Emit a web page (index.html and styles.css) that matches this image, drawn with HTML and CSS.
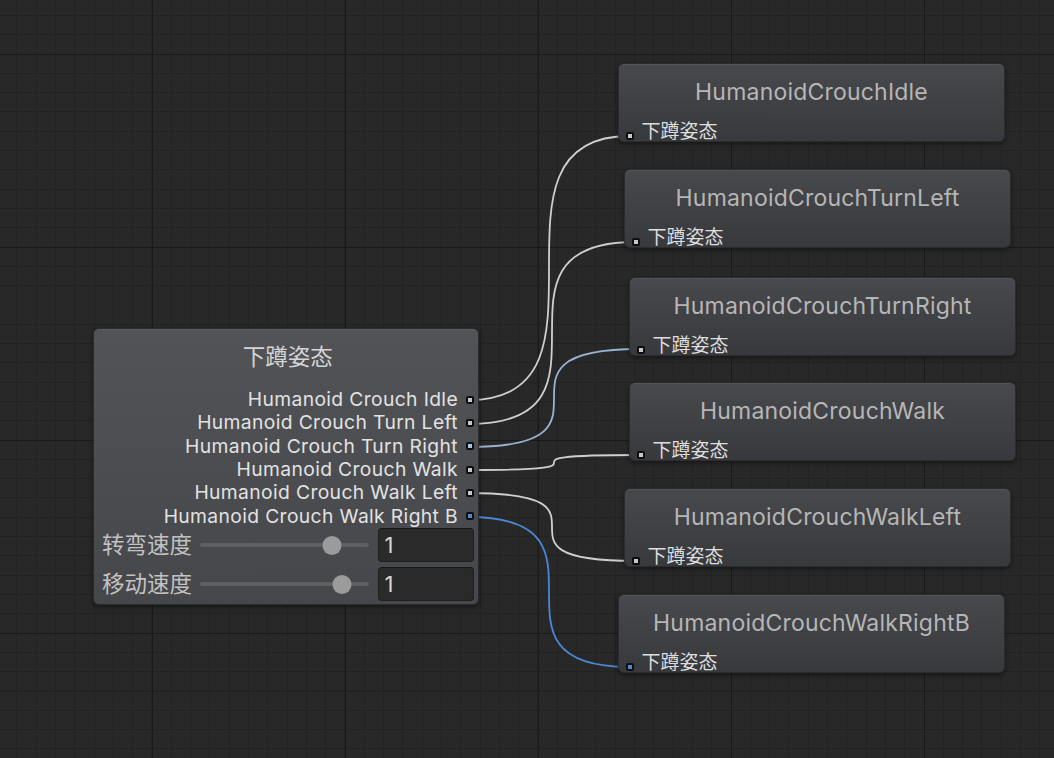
FILE: index.html
```html
<!DOCTYPE html>
<html lang="zh">
<head>
<meta charset="utf-8">
<title>Graph</title>
<link rel="stylesheet" href="styles.css">
</head>
<body>
<div class="canvas">
  <svg class="edges" width="1054" height="758" viewBox="0 0 1054 758">
    <path class="edge" d="M469 400 C629 400 469 136 629 136"/>
    <path class="edge" d="M469 424 C635 424 469 242 635 242"/>
    <path class="edge edge-light-blue" d="M469 447 C639 447 469 349 639 349"/>
    <path class="edge" d="M469 470 C639 470 469 455 639 455"/>
    <path class="edge" d="M469 493 C635 493 469 561 635 561"/>
    <path class="edge edge-blue" d="M469 517 C629 517 469 667 629 667"/>
  </svg>

  <div class="node main">
    <div class="main-title">下蹲姿态</div>
    <div class="outputs">
      <div class="out-row"><span class="out-label">Humanoid Crouch Idle</span><span class="port"></span></div>
      <div class="out-row"><span class="out-label">Humanoid Crouch Turn Left</span><span class="port"></span></div>
      <div class="out-row"><span class="out-label">Humanoid Crouch Turn Right</span><span class="port port-light-blue"></span></div>
      <div class="out-row"><span class="out-label">Humanoid Crouch Walk</span><span class="port"></span></div>
      <div class="out-row"><span class="out-label">Humanoid Crouch Walk Left</span><span class="port"></span></div>
      <div class="out-row"><span class="out-label">Humanoid Crouch Walk Right B</span><span class="port port-blue"></span></div>
    </div>
    <div class="fields">
      <div class="field-row">
        <span class="field-label">转弯速度</span>
        <div class="slider"><div class="track"></div><div class="thumb" style="left:78.6%"></div></div>
        <div class="num">1</div>
      </div>
      <div class="field-row">
        <span class="field-label">移动速度</span>
        <div class="slider"><div class="track"></div><div class="thumb" style="left:84.5%"></div></div>
        <div class="num">1</div>
      </div>
    </div>
  </div>

  <div class="node clip c1">
    <div class="clip-title">HumanoidCrouchIdle</div>
    <div class="in-row"><span class="port"></span><span class="in-label">下蹲姿态</span></div>
  </div>
  <div class="node clip c2">
    <div class="clip-title">HumanoidCrouchTurnLeft</div>
    <div class="in-row"><span class="port"></span><span class="in-label">下蹲姿态</span></div>
  </div>
  <div class="node clip c3">
    <div class="clip-title">HumanoidCrouchTurnRight</div>
    <div class="in-row"><span class="port"></span><span class="in-label">下蹲姿态</span></div>
  </div>
  <div class="node clip c4">
    <div class="clip-title">HumanoidCrouchWalk</div>
    <div class="in-row"><span class="port"></span><span class="in-label">下蹲姿态</span></div>
  </div>
  <div class="node clip c5">
    <div class="clip-title">HumanoidCrouchWalkLeft</div>
    <div class="in-row"><span class="port"></span><span class="in-label">下蹲姿态</span></div>
  </div>
  <div class="node clip c6">
    <div class="clip-title">HumanoidCrouchWalkRightB</div>
    <div class="in-row"><span class="port port-blue"></span><span class="in-label">下蹲姿态</span></div>
  </div>
</div>
</body>
</html>
```
FILE: styles.css
```css
html, body {
  margin: 0;
  padding: 0;
}
body {
  width: 1054px;
  height: 758px;
  overflow: hidden;
  background: #282828;
  font-family: Inter, "Noto Sans CJK SC", sans-serif;
}
.canvas {
  position: relative;
  width: 1054px;
  height: 758px;
  overflow: hidden;
  background-color: #282828;
  background-image:
    repeating-linear-gradient(to right, transparent 0 152px, #1a1a1a 152px 153px, transparent 153px 193px),
    repeating-linear-gradient(to bottom, transparent 0 54px, #1a1a1a 54px 55px, transparent 55px 193px),
    repeating-linear-gradient(to right, transparent 0 16.4px, #222222 16.4px 17.4px, transparent 17.4px 19.3px),
    repeating-linear-gradient(to bottom, transparent 0 15px, #222222 15px 16px, transparent 16px 19.3px);
}
.edges {
  position: absolute;
  left: 0;
  top: 0;
}
.edge {
  fill: none;
  stroke: #cfcfcf;
  stroke-width: 1.8;
}
.edge-light-blue {
  stroke: #98b2d2;
}
.edge-blue {
  stroke: #4b88d4;
}

.node {
  position: absolute;
  box-sizing: border-box;
  border-radius: 6px;
  border: 1px solid #2b2c2e;
  box-shadow: 0 2px 5px rgba(0, 0, 0, 0.45), inset 0 1px 0 rgba(255, 255, 255, 0.06);
}

/* main node */
.main {
  left: 93px;
  top: 328px;
  width: 386px;
  height: 277px;
  padding: 0 4.5px 0 8px;
  background: linear-gradient(to bottom, #525356, #46474a);
  display: flex;
  flex-direction: column;
}
.main-title {
  padding-top: 13px;
  height: 30px;
  line-height: 30px;
  text-align: center;
  font-size: 22.5px;
  color: #d4d4d4;
}
.outputs {
  margin-top: 16px;
  display: flex;
  flex-direction: column;
}
.out-row {
  height: 23.3px;
  display: flex;
  align-items: center;
  justify-content: flex-end;
  gap: 7.5px;
}
.out-label {
  font-size: 19.3px;
  line-height: 23px;
  color: #e2e2e2;
  letter-spacing: 0.36px;
  white-space: nowrap;
}
.port {
  flex: none;
  width: 8px;
  height: 8px;
  box-sizing: border-box;
  border-radius: 2px;
  border: 2px solid #0e0e0e;
  background: #c8c8c8;
}
.port-light-blue {
  background: #a8c2e0;
}
.port-blue {
  background: #4f8ad0;
}

.fields {
  display: flex;
  flex-direction: column;
  gap: 5px;
}
.field-row {
  height: 34px;
  display: flex;
  align-items: center;
  gap: 8px;
}
.field-label {
  font-size: 22.5px;
  line-height: 34px;
  color: #c2c2c2;
  white-space: nowrap;
}
.slider {
  position: relative;
  flex: 1;
  height: 34px;
  margin-right: 1px;
}
.track {
  position: absolute;
  left: 0;
  right: 0;
  top: 15px;
  height: 4px;
  border-radius: 2px;
  background: #5e5f61;
}
.thumb {
  position: absolute;
  top: 8px;
  width: 19px;
  height: 19px;
  border-radius: 50%;
  background: #9b9b9b;
  transform: translateX(-50%);
}
.num {
  width: 96px;
  height: 34px;
  box-sizing: border-box;
  border: 1px solid #1f1f1f;
  border-top-color: #171717;
  border-radius: 4px;
  background: #2a2a2a;
  color: #d6d6d6;
  font-size: 22px;
  line-height: 32px;
  padding-left: 6px;
}

/* clip nodes */
.clip {
  width: 387px;
  height: 79px;
  overflow: hidden;
  display: flex;
  flex-direction: column;
  background: linear-gradient(to bottom, #48494c, #38393c);
}
.c1 { left: 618px; top: 63px; }
.c2 { left: 624px; top: 169px; }
.c3 { left: 629px; top: 277px; }
.c4 { left: 629px; top: 382px; }
.c5 { left: 624px; top: 488px; }
.c6 { left: 618px; top: 594px; }

.clip-title {
  height: 56px;
  line-height: 56px;
  text-align: center;
  font-size: 23px;
  color: #b6b6b6;
  letter-spacing: 0.2px;
  white-space: nowrap;
}
.in-row {
  flex: 1;
  display: flex;
  align-items: flex-end;
  padding-left: 6.5px;
  gap: 8px;
}
.in-row .port {
  margin-bottom: 1.5px;
}
.in-label {
  font-size: 19px;
  line-height: 19px;
  margin-bottom: 0;
  color: #dedede;
  white-space: nowrap;
}
```
